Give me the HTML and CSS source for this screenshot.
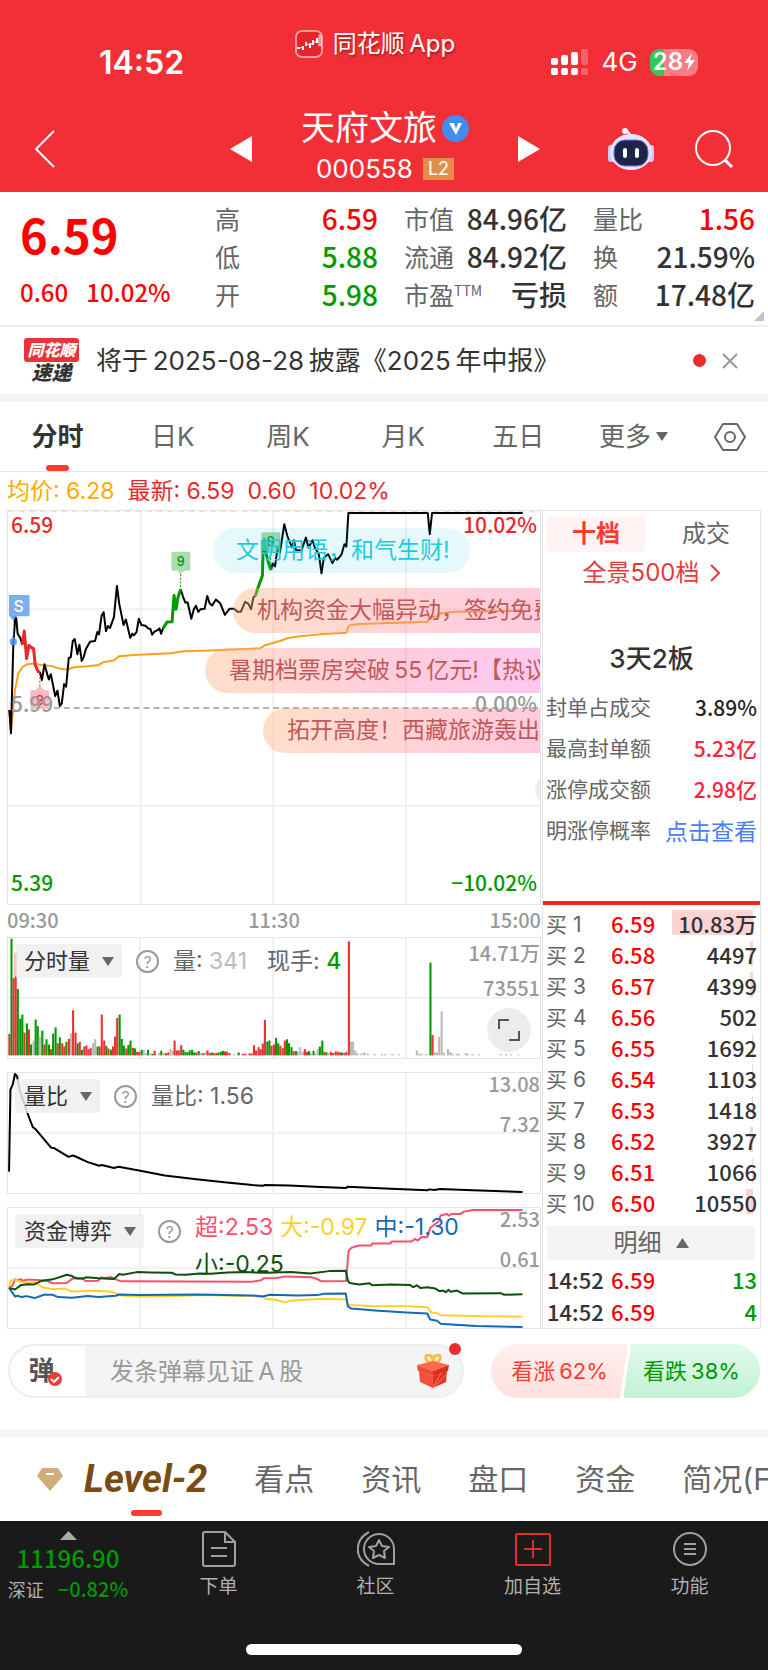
FILE: index.html
```html
<!DOCTYPE html>
<html lang="zh-CN">
	<head>
		<meta charset="utf-8">
		<meta name="viewport" content="width=device-width, initial-scale=1">
		<title>天府文旅 000558</title>
		<link rel="stylesheet" href="styles.css">
	</head>
	<body>
		<header class="top">
			<div class="status">
				<span class="clock">14:52</span>
				<div class="app-mark">
					<svg width="28" height="28" viewBox="0 0 28 28">
						<rect x="1" y="1" width="26" height="26" rx="6" fill="#e3262c" stroke="#f79a9c" stroke-width="2"/>
						<path d="M2 18H5M8 16v4M11 12v4M15 13v5M18 10v5M22 8v5" stroke="#fff" stroke-width="2"/>
						<rect x="24" y="5" width="2" height="11" rx="1" fill="none" stroke="#fff"/>
						<path d="M5 18L8 17M11 14L15 15L18 13L22 11" stroke="#fff" fill="none"/>
					</svg>
					<span>同花顺&thinsp;App</span>
				</div>
				<div class="signals">
					<svg width="38" height="26" viewBox="0 0 38 26" fill="#fff">
						<rect x="0" y="9" width="7" height="7" rx="2"/>
						<rect x="10" y="6" width="7" height="10" rx="2"/>
						<rect x="20" y="3" width="7" height="13" rx="2"/>
						<rect x="30" y="0" width="7" height="16" rx="2" opacity=".25"/>
						<rect x="0" y="19" width="7" height="7" rx="2"/>
						<rect x="10" y="19" width="7" height="7" rx="2"/>
						<rect x="20" y="19" width="7" height="7" rx="2"/>
						<rect x="30" y="19" width="7" height="7" rx="2" opacity=".25"/>
					</svg>
					<span class="net">4G</span>
					<span class="battery">28<svg width="11" height="18" viewBox="0 0 11 18"><path d="M8 0L0 10h5L3 18L11 7H6z" fill="#fff"/></svg></span>
				</div>
			</div>
			<nav class="stock-nav">
				<button class="icon-btn back" aria-label="返回">
					<svg width="22" height="40" viewBox="0 0 22 40"><path d="M20 2L2 20L20 38" fill="none" stroke="#fff" stroke-width="2"/></svg>
				</button>
				<button class="icon-btn prev" aria-label="上一只">
					<svg width="22" height="26" viewBox="0 0 22 26"><path d="M22 0V26L0 13z" fill="#fff"/></svg>
				</button>
				<div class="stock-title">
					<h1>天府文旅
						<svg width="27" height="27" viewBox="0 0 27 27"><circle cx="13.500" cy="13.500" r="13.500" fill="#448df0"/><path d="M7 8h5l2 6l2-6h4l-6 12z" fill="#fff"/></svg>
					</h1>
					<p>000558<span class="l2">L2</span></p>
				</div>
				<button class="icon-btn next" aria-label="下一只">
					<svg width="22" height="26" viewBox="0 0 22 26"><path d="M0 0V26L22 13z" fill="#fff"/></svg>
				</button>
				<button class="icon-btn robot" aria-label="智能助手">
					<svg width="46" height="44" viewBox="0 0 46 44">
						<path d="M22 9C22 5 19 5 17 3" fill="none" stroke="#fff" stroke-width="2"/>
						<circle cx="17" cy="4" r="3" fill="#fff"/>
						<rect x="0" y="18" width="7" height="17" rx="3" fill="#c9caf6"/>
						<rect x="39" y="18" width="7" height="17" rx="3" fill="#c9caf6"/>
						<ellipse cx="23" cy="25" rx="21" ry="18" fill="#e6e6fd"/>
						<rect x="6" y="13" width="34" height="26" rx="11" fill="#1c2547" stroke="#7a6fe8" stroke-width="1"/>
						<rect x="15" y="21" width="4" height="10" rx="2" fill="#fff"/>
						<rect x="27" y="21" width="4" height="10" rx="2" fill="#fff"/>
					</svg>
				</button>
				<button class="icon-btn search" aria-label="搜索">
					<svg width="40" height="40" viewBox="0 0 40 40" fill="none" stroke="#fff" stroke-width="2"><circle cx="19" cy="19" r="17"/><path d="M31 31L38 38" stroke-width="3"/></svg>
				</button>
			</nav>
		</header>

		<section class="quote">
			<div class="price">
				<strong>6.59</strong>
				<p><span>0.60</span><span>10.02%</span></p>
			</div>
			<dl>
				<div><dt>高</dt><dd class="up">6.59</dd></div>
				<div><dt>低</dt><dd class="down">5.88</dd></div>
				<div><dt>开</dt><dd class="down">5.98</dd></div>
			</dl>
			<dl>
				<div><dt>市值</dt><dd>84.96亿</dd></div>
				<div><dt>流通</dt><dd>84.92亿</dd></div>
				<div><dt>市盈<sup>TTM</sup></dt><dd>亏损</dd></div>
			</dl>
			<dl>
				<div><dt>量比</dt><dd class="up">1.56</dd></div>
				<div><dt>换</dt><dd>21.59%</dd></div>
				<div><dt>额</dt><dd>17.48亿</dd></div>
			</dl>
			<svg class="corner" width="10" height="10" viewBox="0 0 10 10"><path d="M10 0V10H0z" fill="#c4c4c4"/></svg>
		</section>

		<section class="news">
			<div class="news-logo"><b>同花顺</b><i>速递</i></div>
			<a href="#">将于&thinsp;2025-08-28&thinsp;披露《2025&thinsp;年中报》</a>
			<span class="dot"></span>
			<button class="icon-btn" aria-label="关闭">
				<svg width="16" height="16" viewBox="0 0 16 16"><path d="M1 1L15 15M15 1L1 15" stroke="#999" stroke-width="2"/></svg>
			</button>
		</section>

		<nav class="periods">
			<button class="active">分时</button>
			<button>日K</button>
			<button>周K</button>
			<button>月K</button>
			<button>五日</button>
			<button>更多<svg width="12" height="9" viewBox="0 0 12 9"><path d="M0 0H12L6 9z" fill="#666"/></svg></button>
			<button aria-label="设置">
				<svg width="32" height="30" viewBox="0 0 32 30" fill="none" stroke="#666" stroke-width="2"><path d="M9 2H23L31 15L23 28H9L1 15z" stroke-linejoin="round"/><circle cx="16" cy="15" r="5"/></svg>
			</button>
		</nav>

		<p class="legend">
			<span class="avg">均价: 6.28</span>
			<span>最新: 6.59</span>
			<span>0.60</span>
			<span>10.02%</span>
		</p>

		<main class="board">
			<div class="charts">
				<div class="chart chart-price">
					<svg class="plot" viewBox="0 0 1602 1185" preserveAspectRatio="none">
						<path class="grid" d="M0 296H1602M0 889H1602M399 0V1185M799 0V1185M1198 0V1185"/>
						<path d="M0 0H1602" stroke="#e8d9bd" stroke-width="5" stroke-dasharray="18 14"/>
						<path d="M138 594H1602" stroke="#999" stroke-width="4" stroke-dasharray="18 12"/>
						<g transform="translate(-21 -330)">
							<polyline class="line" stroke="#ff9f1a" points="25,930 30,990 36,930 42,870 52,820 65,800 80,792 95,790 120,794 150,797 180,806 200,808 220,801 260,798 295,794 305,787 340,780 355,768 400,764 510,759 550,753 630,751 780,744 795,735 840,722 865,713 900,708 960,702 1040,697 1045,680 1052,674 1080,671 1285,664 1290,650 1310,648 1325,638 1370,634 1571,631"/>
							<polyline class="line" stroke="#000" points="25,930 30,1000 37,730 43,650 46,655 50,700 58,712 64,733"/>
							<polyline class="line" stroke="#000" points="117,815 123,840 131,792 140,825 144,838 150,822 163,888 170,872 177,918 183,910 190,852 196,860 204,773 210,771 216,722 222,716 230,762 236,733 243,782 249,770 256,745 268,724 283,722 290,695 295,702 303,645 309,635 316,692 322,677 328,683 340,650 349,556 356,610 369,674 376,657 389,712 395,700 400,705 408,695 415,655 423,674 435,676 443,684 450,686 455,703 462,694 470,690 477,684 482,700 488,684"/>
							<polyline class="line" stroke="#000" points="541,566 548,588 555,606 562,606 573,655 581,625 587,616 594,634 601,626 613,625 621,586 628,608 636,615 647,597 660,608 674,643 688,625 702,625 712,634 722,634 735,604 745,610 753,626 760,590 766,586"/>
							<polyline class="line" stroke="#000" points="813,508 818,488 825,497 833,440 840,455 853,370 862,405 870,425 876,440 882,418 888,448 905,448 918,410 926,440 938,418 945,440 957,460 965,518 972,472 985,460 998,487 1006,472 1012,477 1025,462 1034,430 1040,437 1046,336 1285,336 1291,400 1298,336 1571,336"/>
							<polyline class="line thick" stroke="#e8292c" points="64,733 70,692 77,775 84,735 92,742 98,745 103,795 112,815 117,815"/>
							<polyline class="line thick" stroke="#090" points="488,684 500,665 515,664 521,585 527,626 533,590 541,566"/>
							<polyline class="line thick" stroke="#090" points="766,586 775,558 787,525 789,455 793,415 799,460 805,485 813,508"/>
							<path d="M541 520V566M812 450V508" stroke="#090" stroke-width="3" stroke-dasharray="6 5"/>
							<path d="M117 820V860" stroke="#e8292c" stroke-width="3" stroke-dasharray="6 5"/>
							<path d="M37 650V714" stroke="#4c92f0" stroke-width="3" stroke-dasharray="5 5"/>
							<circle cx="37" cy="724" r="11" fill="#4c92f0" opacity=".85"/>
							<path d="M24 583H82Q86 583 86 587V643Q86 647 82 647H48L37 660L26 647H24z" fill="#5d9bec" opacity=".8"/>
							<path d="M513 458Q513 453 518 453H565Q570 453 570 458V505Q570 510 565 510H552L541 521L530 510H518Q513 510 513 505z" fill="#8fd196" opacity=".75"/>
							<path d="M784 399Q784 394 789 394H836Q841 394 841 399V446Q841 450 836 450H823L812 461L801 450H789Q784 450 784 446z" fill="#7fc98a" opacity=".7"/>
							<path d="M88 875Q88 870 93 870H105L117 856L129 870H140Q145 870 145 875V922Q145 927 140 927H93Q88 927 88 922z" fill="#f5a0a4" opacity=".7"/>
							<text class="tag" x="53" y="634" font-size="48" fill="#fff">S</text>
							<text class="tag" x="541" y="496" font-size="38" fill="#090">9</text>
							<text class="tag" x="812" y="436" font-size="38" fill="#090">9</text>
							<text class="tag" x="117" y="915" font-size="38" fill="#f22">9</text>
						</g>
					</svg>
					<div class="danmu">
						<span class="polite">文明用语，和气生财!</span>
						<span class="d1">机构资金大幅异动，签约免费</span>
						<span class="d2">暑期档票房突破&thinsp;55&thinsp;亿元!【热议】</span>
						<span class="d3">拓开高度！西藏旅游轰出</span>
					</div>
					<span class="drawer"></span>
					<div class="scale num">
						<p class="up"><span>6.59</span><span>10.02%</span></p>
						<p><span>5.99</span><span>0.00%</span></p>
						<p class="down"><span>5.39</span><span>−10.02%</span></p>
					</div>
				</div>
				<p class="times num"><span>09:30</span><span>11:30</span><span>15:00</span></p>

				<div class="chart chart-sub">
					<svg class="plot" viewBox="0 0 1520 365" preserveAspectRatio="none">
						<path class="grid" d="M0 182H1520M377 0V365M757 0V365M1137 0V365"/>
						<g id="volume" transform="translate(-22 -650)"></g>
					</svg>
					<div class="sub-head">
						<label class="picker"><select aria-label="指标一"><option>分时量</option></select><svg width="12" height="9" viewBox="0 0 12 9"><path d="M0 0H12L6 9z" fill="#666"/></svg></label>
						<button class="help" aria-label="说明">?</button>
						<p><span>量: <em>341</em></span><span>现手: <b class="down">4</b></span></p>
					</div>
					<p class="sub-scale volume-scale num"><span>14.71万</span><span>73551</span></p>
					<button class="expand" aria-label="全屏">
						<svg width="24" height="24" viewBox="0 0 24 24" fill="none" stroke="#555" stroke-width="2"><path d="M2 11V2H12M22 13V22H12"/></svg>
					</button>
				</div>

				<div class="chart chart-sub">
					<svg class="plot" viewBox="0 0 1520 365" preserveAspectRatio="none">
						<path class="grid" d="M0 182H1520M377 0V365M757 0V365M1137 0V365"/>
						<polyline class="line" stroke="#000" transform="translate(-22 -35)" points="25,335 29,85 35,72 42,38 48,45 55,85 75,150 93,200 100,205 145,262 155,264 195,290 207,286 215,289 250,306 283,317 290,315 325,324 338,320 400,332 470,347 560,358 640,367 720,376 750,378 755,376 825,377 900,381 988,385 992,381 1100,386 1220,392 1226,389 1240,391 1256,388 1350,392 1492,397"/>
					</svg>
					<div class="sub-head">
						<label class="picker"><select aria-label="指标二"><option>量比</option></select><svg width="12" height="9" viewBox="0 0 12 9"><path d="M0 0H12L6 9z" fill="#666"/></svg></label>
						<button class="help" aria-label="说明">?</button>
						<p><span>量比: 1.56</span></p>
					</div>
					<p class="sub-scale num"><span>13.08</span><span>7.32</span></p>
				</div>

				<div class="chart chart-sub">
					<svg class="plot" viewBox="0 0 1520 365" preserveAspectRatio="none">
						<path class="grid" d="M0 182H1520M377 0V365M757 0V365M1137 0V365"/>
						<g transform="translate(-22 -439)">
							<polyline class="line" stroke="#fd4f6b" points="25,680 35,675 42,655 50,660 57,655 65,660 75,657 100,657 130,660 150,668 190,667 207,653 222,654 235,652 243,661 280,660 287,650 300,652 318,649 330,656 345,662 720,663 745,659 752,653 790,652 815,647 890,650 905,655 918,662 988,661 995,570 1003,560 1025,553 1060,553 1063,547 1115,547 1118,541 1175,541 1185,533 1193,538 1203,527 1220,528 1228,500 1240,490 1252,480 1258,462 1275,457 1282,462 1290,457 1315,457 1325,450 1350,445 1492,445"/>
							<polyline class="line" stroke="#fbd02d" points="25,682 30,660 42,656 55,663 80,667 100,665 120,680 150,686 185,684 205,693 270,691 320,694 345,705 400,708 500,707 580,704 750,708 760,716 790,719 812,726 830,721 880,717 920,715 988,717 993,734 1060,737 1160,738 1220,741 1232,757 1245,758 1258,765 1380,768 1492,770"/>
							<polyline class="line" stroke="#1468b8" points="25,682 42,708 50,706 60,710 75,707 98,713 125,703 150,703 165,710 205,712 250,707 280,710 330,706 340,702 400,704 560,702 720,705 750,708 770,703 850,705 905,704 925,700 987,699 993,738 1003,745 1070,751 1160,757 1220,760 1228,778 1248,782 1258,791 1300,794 1360,798 1492,801"/>
							<polyline class="line" stroke="#0c4f0c" points="25,682 42,687 60,673 80,671 95,672 120,660 150,656 190,642 205,646 215,652 235,654 245,650 280,653 325,655 340,640 350,642 390,634 430,635 490,636 500,641 530,642 570,638 600,639 650,635 700,634 760,636 830,634 885,638 940,631 987,630 993,660 998,667 1025,672 1055,668 1062,674 1115,672 1170,673 1180,680 1190,674 1200,682 1220,680 1243,684 1255,692 1265,690 1273,695 1280,688 1287,694 1305,690 1320,699 1430,698 1440,703 1492,701"/>
						</g>
					</svg>
					<div class="sub-head">
						<label class="picker"><select aria-label="指标三"><option>资金博弈</option></select><svg width="12" height="9" viewBox="0 0 12 9"><path d="M0 0H12L6 9z" fill="#666"/></svg></label>
						<button class="help" aria-label="说明">?</button>
						<p class="flows"><span class="f-super">超:2.53</span><span class="f-big">大:-0.97</span><span class="f-mid">中:-1.30</span><span class="f-small">小:-0.25</span></p>
					</div>
					<p class="sub-scale num"><span>2.53</span><span>0.61</span></p>
				</div>
			</div>

			<aside class="depth">
				<div class="depth-tabs"><button class="active">十档</button><button>成交</button></div>
				<a class="panorama" href="#">全景500档<svg width="10" height="18" viewBox="0 0 10 18"><path d="M1 1L9 9L1 17" fill="none" stroke="#e8393b" stroke-width="2"/></svg></a>
				<h2>3天2板</h2>
				<dl class="facts">
					<div><dt>封单占成交</dt><dd>3.89%</dd></div>
					<div><dt>最高封单额</dt><dd class="hot">5.23亿</dd></div>
					<div><dt>涨停成交额</dt><dd class="hot">2.98亿</dd></div>
					<div><dt>明涨停概率</dt><dd><a href="#">点击查看</a></dd></div>
				</dl>
				<table class="orders">
					<tr><th>买 1</th><td class="up">6.59</td><td class="vol" style="--w:81px">10.83万</td></tr>
					<tr><th>买 2</th><td class="up">6.58</td><td class="vol" style="--w:3px">4497</td></tr>
					<tr><th>买 3</th><td class="up">6.57</td><td class="vol" style="--w:3px">4399</td></tr>
					<tr><th>买 4</th><td class="up">6.56</td><td class="vol" style="--w:0px">502</td></tr>
					<tr><th>买 5</th><td class="up">6.55</td><td class="vol" style="--w:1px">1692</td></tr>
					<tr><th>买 6</th><td class="up">6.54</td><td class="vol" style="--w:1px">1103</td></tr>
					<tr><th>买 7</th><td class="up">6.53</td><td class="vol" style="--w:1px">1418</td></tr>
					<tr><th>买 8</th><td class="up">6.52</td><td class="vol" style="--w:3px">3927</td></tr>
					<tr><th>买 9</th><td class="up">6.51</td><td class="vol" style="--w:1px">1066</td></tr>
					<tr><th>买 10</th><td class="up">6.50</td><td class="vol" style="--w:7px">10550</td></tr>
				</table>
				<button class="detail">明细<svg width="13" height="10" viewBox="0 0 13 10"><path d="M0 10H13L6.500 0z" fill="#666"/></svg></button>
				<table class="trades">
					<tr><td>14:52</td><td class="up">6.59</td><td class="down">13</td></tr>
					<tr><td>14:52</td><td class="up">6.59</td><td class="down">4</td></tr>
				</table>
			</aside>
		</main>

		<section class="comment">
			<div class="comment-box">
				<button class="danmu-toggle" aria-label="弹幕开关">弹
					<svg width="14" height="14" viewBox="0 0 14 14"><circle cx="7" cy="7" r="7" fill="#f03a36"/><path d="M3 7L6 10L11 5" fill="none" stroke="#fff" stroke-width="2"/></svg>
				</button>
				<input type="text" aria-label="发弹幕" placeholder="发条弹幕见证&thinsp;A&thinsp;股">
				<button class="icon-btn gift" aria-label="礼物">
					<svg width="32" height="34" viewBox="0 0 32 34">
						<path d="M16 9C8 9 7 1 11 1S16 5 16 9C16 5 17 1 21 1S24 9 16 9z" fill="none" stroke="#f8bb4e" stroke-width="3"/>
						<path d="M0 11L16 7L32 11L16 17z" fill="#ff6b4b"/>
						<path d="M0 11L16 17V22L1 17z" fill="#f04a32"/><path d="M32 11L16 17V22L31 17z" fill="#d9301f"/>
						<path d="M2 17L16 22V34L3 28z" fill="#f4503a"/><path d="M30 17L16 22V34L29 28z" fill="#e03324"/>
						<path d="M16 34L24 19M16 34L29 21" stroke="#fa7a55" stroke-width="1"/>
					</svg>
				</button>
				<span class="dot"></span>
			</div>
			<div class="votes">
				<button class="bull">看涨&thinsp;62%</button>
				<button class="bear">看跌&thinsp;38%</button>
			</div>
		</section>

		<nav class="sections">
			<a class="level2" href="#">
				<svg width="26" height="24" viewBox="0 0 26 24"><path d="M5 1H21L26 9L13 24L0 9z" fill="#cfae7c"/><path d="M9 7H17" stroke="#fff" stroke-width="2"/></svg>
				<span>Level-2</span>
			</a>
			<a href="#">看点</a>
			<a href="#">资讯</a>
			<a href="#">盘口</a>
			<a href="#">资金</a>
			<a href="#">简况(F10)</a>
		</nav>

		<footer class="bottom">
			<div class="bottom-items">
				<a class="index num" href="#">
					<svg width="17" height="9" viewBox="0 0 17 9"><path d="M0 9H17L8.500 0z" fill="#aaa"/></svg>
					<strong>11196.90</strong>
					<span>深证 <b>−0.82%</b></span>
				</a>
				<a href="#">
					<svg width="34" height="36" viewBox="0 0 34 36" fill="none" stroke="#a0a0a0" stroke-width="2"><path d="M3 1H23L33 11V33Q33 35 31 35H3Q1 35 1 33V3Q1 1 3 1zM23 1V11H33M9 17H25M9 25H25"/></svg>
					下单
				</a>
				<a href="#">
					<svg width="38" height="36" viewBox="0 0 38 36" fill="none" stroke="#a0a0a0" stroke-width="2"><path d="M12 1C-3 9-3 27 12 35M22 3A15 15 0 0 0 22 33H37V18A15 15 0 0 0 22 3z"/><path d="M22 9L25 15L32 16L27 20L28 27L22 24L16 27L17 20L12 16L19 15z" stroke-linejoin="round"/></svg>
					社区
				</a>
				<a href="#">
					<svg width="36" height="36" viewBox="0 0 36 36" fill="none" stroke="#e8292c" stroke-width="2"><rect x="1" y="3" width="34" height="31" rx="1"/><path d="M9 18H27M18 9V27"/></svg>
					加自选
				</a>
				<a href="#">
					<svg width="36" height="36" viewBox="0 0 36 36" fill="none" stroke="#a0a0a0" stroke-width="2"><circle cx="18" cy="18" r="16"/><path d="M12 13H24M12 18H24M12 23H24"/></svg>
					功能
				</a>
			</div>
			<div class="home-bar"></div>
		</footer>

	<script>
		// one entry per minute: x, colour (r up, g down, k flat), top of the bar
		const bars = "26r942 32g652 38r772 44r695 50g805 57g895 63g883 69r938 76g910 82r928 88g974 95k962 101g898 107g918 113k950 120g932 126r974 132g958 139g974 145r988 151g941 158g922 164r970 170g952 177r970 183r980 189g966 196r957 202k940 208r870 215r938 221g971 227r966 233g990 240r980 246r977 252r988 258r985 265k970 271k958 278g980 284r980 290r883 297r962 303g978 309r986 316g990 322r980 328r950 334r893 341g883 347g957 353g977 360r986 366g975 372g962 379r984 385g986 391r996 397r996 404g990 410k990 416k1000 422g990 429k1001 435g1002 441r993 454k1000 460g993 467k1000 473r1000 480r998 486k988 492k992 498r962 504r992 510r992 517r976 523g990 529g996 535g998 541g992 548g990 554g998 560r998 567g994 573k1000 580r1000 586k998 592r992 598r1000 604g998 610r1000 617r1000 623g998 630g996 636g993 642r995 648r996 655r1000 667k1003 681g998 693r1002 700r1002 712r1001 718r1001 725r976 731r992 738r982 744r988 750r971 756r899 763g965 769g962 775r978 782r974 788g954 794g970 800r978 807r985 813r962 819g958 825g970 832g982 838r994 845g994 851k996 857k982 864k996 870r988 876r996 882g994 888k1000 895g993 901k1000 907k988 913g980 920g962 926r996 932g998 939k1000 945r996 951r1000 958r995 964r996 970r998 976g998 983r1000 989r996 996r660 1002k965 1008k965 1014k992 1020k1000 1032k1001 1040k998 1050k1001 1070k1003 1090k1003 1100k1003 1120k1003 1140k1003 1190k992 1197k1002 1204k1002 1216k1003 1229g725 1235r945 1242k998 1248k998 1254k951 1261k873 1267k998 1279k988 1286k997 1292k1002 1304k1003 1310k1002 1330k1000 1336k1003 1349k1003 1368k1004 1430k1003 1445k1003 1460k1004 1480k1004";
		const colors = { r: "#ee2f32", g: "#090", k: "#b9b9b9" };
		const volume = document.getElementById("volume");

		bars.split(" ").forEach(function(bar) {
			const [, x, side, top] = bar.match(/(\d+)([rgk])(\d+)/);
			const path = document.createElementNS("http://www.w3.org/2000/svg", "path");
			path.setAttribute("d", `M${x} 1007V${top}`);
			path.setAttribute("stroke", colors[side]);
			path.setAttribute("stroke-width", 6);
			volume.appendChild(path);
		});
	</script>
	</body>
</html>
```
FILE: styles.css
```css
* {
	box-sizing: border-box;
	margin: 0;
	padding: 0;
}

body {
	background: #fff;
	color: #333;
	font-family: Inter, "Noto Sans CJK SC", sans-serif;
	font-size: 22px;
	line-height: 1;
}

svg {
	display: block;
	flex: none;
}

button {
	background: none;
	border: 0;
	color: inherit;
	font: inherit;
}

a {
	color: inherit;
	text-decoration: none;
}

.icon-btn {
	display: block;
}

.num {
	font-family: "Noto Sans CJK SC", sans-serif;
	font-weight: 500;
}

.up {
	color: #f00;
}
.down {
	color: #090;
}

/* header */
.top {
	background: #f22f37;
	color: #fff;
	height: 192px;
}

.status {
	display: grid;
	grid-template-columns: 1fr auto 1fr;
	height: 100px;
	padding: 0 70px;
}

.clock {
	padding: 47px 0 0 29px;
	font-size: 32px;
	font-weight: 600;
}

.app-mark {
	display: flex;
	align-items: center;
	gap: 10px;
	height: 88px;
	padding-right: 18px;
	font-size: 24px;
	text-shadow: 1px 2px 2px rgba(0, 0, 0, .35);
}

.signals {
	display: flex;
	align-items: center;
	justify-content: flex-end;
	gap: 12px;
	height: 124px;
	font-size: 26px;
}

.battery {
	display: flex;
	align-items: center;
	gap: 1px;
	height: 27px;
	padding: 0 3px;
	border-radius: 9px;
	background: linear-gradient(90deg, #35c759 14px, #f87c81 14px);
	font-size: 24px;
	font-weight: 600;
}

.stock-nav {
	display: flex;
	align-items: center;
	height: 92px;
	padding: 6px 34px 0;
}

.stock-nav .prev {
	margin-left: auto;
}

.stock-title {
	width: 266px;
	text-align: center;
}

.stock-title h1 {
	display: flex;
	align-items: center;
	justify-content: center;
	gap: 5px;
	height: 40px;
	font-size: 34px;
	font-weight: 400;
}

.stock-title p {
	display: flex;
	align-items: center;
	justify-content: center;
	gap: 10px;
	height: 42px;
	font-size: 26px;
}

.l2 {
	padding: 2px 5px;
	background: #e29047;
	font-size: 18px;
}

.stock-nav .next {
	margin-right: 68px;
}

.stock-nav .robot {
	margin-right: 40px;
}

/* quote */
.quote {
	position: relative;
	display: grid;
	grid-template-columns: 1fr 163px 163px 162px;
	column-gap: 26px;
	height: 135px;
	padding: 7px 13px 0 20px;
	border-bottom: 2px solid #eee;
	font-family: "Noto Sans CJK SC", sans-serif;
}

.price {
	color: #f00;
	font-weight: 500;
}

.price strong {
	display: block;
	height: 76px;
	font-size: 47px;
	font-weight: 700;
	line-height: 70px;
}

.price p {
	display: flex;
	gap: 18px;
	font-size: 24px;
	line-height: 34px;
}

.quote dl div {
	display: flex;
	justify-content: space-between;
	align-items: center;
	height: 38px;
}

.quote dt {
	color: #666;
	font-size: 25px;
}

.quote sup {
	font-size: 14px;
}

.quote dd {
	font-size: 28px;
	font-weight: 500;
	white-space: nowrap;
}

.corner {
	position: absolute;
	right: 4px;
	bottom: 4px;
}

.news {
	display: flex;
	align-items: center;
	height: 75px;
	padding: 0 30px 0 24px;
	border-bottom: 8px solid #f4f4f4;
}

.news-logo {
	width: 55px;
	margin-right: 17px;
	text-align: center;
}

.news-logo b {
	display: block;
	padding: 2px 0;
	border-radius: 3px;
	background: #e8333a;
	color: #fff;
	font-size: 16px;
	font-style: italic;
	font-weight: 900;
	line-height: 20px;
}

.news-logo i {
	display: block;
	font-size: 20px;
	font-weight: 900;
	line-height: 22px;
}

.news a {
	flex: 1;
	font-size: 26px;
}

.dot {
	width: 13px;
	height: 13px;
	border-radius: 50%;
	background: #ea2c30;
}

.news .dot {
	margin-right: 16px;
}

.periods {
	display: grid;
	grid-template-columns: repeat(6, 15%) 10%;
	height: 70px;
	border-bottom: 1px solid #e8e8e8;
}

.periods button {
	display: flex;
	align-items: center;
	justify-content: center;
	gap: 5px;
	color: #666;
	font-size: 26px;
}

.periods .active {
	position: relative;
	color: #333;
	font-weight: 700;
}

.periods .active::after {
	content: "";
	position: absolute;
	bottom: 0;
	width: 23px;
	height: 6px;
	border-radius: 3px;
	background: #ff3b30;
}

.legend {
	display: flex;
	gap: 13px;
	padding: 0 7px;
	color: #e8292c;
	font-size: 23px;
	line-height: 38px;
}

.legend .avg {
	color: #fa0;
}

/* charts */
.board {
	display: grid;
	grid-template-columns: 1fr 219px;
	gap: 1px;
	padding: 0 7px;
}

.chart {
	position: relative;
	overflow: hidden;
	border: 1px solid #e4e4e4;
}

.chart-price {
	height: 395px;
}

.chart-sub {
	height: 122px;
	margin-bottom: 13px;
}

.chart-sub:last-child {
	margin-bottom: 0;
}

.plot {
	position: absolute;
	inset: 0;
	width: 100%;
	height: 100%;
}

.grid {
	fill: none;
	stroke: #f0f0f0;
	stroke-width: 2px;
	vector-effect: non-scaling-stroke;
}

.line {
	fill: none;
	stroke-width: 2px;
	stroke-linejoin: round;
	vector-effect: non-scaling-stroke;
}

.line.thick {
	stroke-width: 3px;
}

.tag {
	text-anchor: middle;
	font-weight: 500;
}

.danmu {
	position: absolute;
	inset: 0;
	display: flex;
	flex-direction: column;
	gap: 15px;
	padding-top: 17px;
	font-size: 23px;
	line-height: 45px;
	white-space: nowrap;
}

.danmu span {
	padding-left: 24px;
	border-radius: 23px 0 0 23px;
	background: linear-gradient(100deg, rgba(255, 175, 121, .4), rgba(255, 127, 172, .4) 90%);
	color: #c0595a;
}

.danmu .polite {
	align-self: flex-start;
	margin-left: 205px;
	padding: 0 20px 0 23px;
	border-radius: 23px;
	background: rgba(0, 200, 230, .1);
	color: #1ccbe0;
}

.danmu .d1 {
	margin-left: 225px;
}

.danmu .d2 {
	margin-left: 197px;
	background: linear-gradient(100deg, rgba(255, 175, 121, .4), rgba(255, 127, 172, .4) 60%, rgba(250, 117, 222, .4));
}

.danmu .d3 {
	margin-left: 255px;
}

.drawer {
	position: absolute;
	right: -29px;
	top: 262px;
	width: 34px;
	height: 34px;
	border-radius: 50%;
	background: #eee;
}

.scale {
	position: relative;
	display: flex;
	flex-direction: column;
	justify-content: space-between;
	height: 100%;
	padding: 3px 3px 11px;
	color: #999;
	font-size: 21px;
}

.scale p,
.times {
	display: flex;
	justify-content: space-between;
}

.scale .up {
	color: #e8292c;
}

.times {
	color: #999;
	font-size: 20px;
	line-height: 30px;
	padding-bottom: 2px;
}

.sub-head {
	position: relative;
	display: flex;
	align-items: flex-start;
	gap: 14px;
	padding: 6px 0 0 7px;
	color: #666;
	line-height: 34px;
}

.picker {
	display: flex;
	align-items: center;
	gap: 11px;
	height: 34px;
	padding: 0 8px 0 9px;
	border-radius: 4px;
	background: rgba(238, 238, 238, .85);
}

.picker select {
	appearance: none;
	border: 0;
	background: none;
	color: #333;
	font: inherit;
}

.help {
	width: 23px;
	height: 23px;
	margin-top: 6px;
	border: 2px solid #999;
	border-radius: 50%;
	color: #999;
	font-size: 16px;
	line-height: 18px;
}

.sub-head p {
	display: flex;
	gap: 20px;
	font-size: 23px;
}

.sub-head em {
	color: #bbb;
	font-style: normal;
}

.sub-head b {
	font-weight: 500;
}

.sub-head .flows {
	flex-wrap: wrap;
	gap: 0 7px;
	width: 300px;
	margin-top: -5px;
	line-height: 37px;
}

.f-super {
	color: #fd4f6b;
}
.f-big {
	color: #fbd02d;
}
.f-mid {
	color: #1468b8;
}
.f-small {
	color: #0c4f0c;
}

.sub-scale {
	position: absolute;
	top: 0;
	right: 0;
	display: flex;
	flex-direction: column;
	gap: 18px;
	color: #999;
	font-size: 20px;
	line-height: 22px;
	text-align: right;
}

.volume-scale {
	gap: 13px;
	padding-top: 4px;
}

.expand {
	position: absolute;
	right: 9px;
	bottom: 6px;
	display: grid;
	place-items: center;
	width: 44px;
	height: 44px;
	border-radius: 50%;
	background: #ececec;
}

/* order book */
.depth {
	border: 1px solid #e4e4e4;
}

.depth-tabs {
	display: grid;
	grid-template-columns: 98px 98px;
	gap: 12px;
	padding: 5px 4px 0;
}

.depth-tabs button {
	height: 36px;
	border-radius: 4px;
	color: #666;
	font-size: 24px;
}

.depth-tabs .active {
	background: #fff3f3;
	color: #ff3b30;
	font-weight: 700;
}

.panorama {
	display: flex;
	align-items: center;
	justify-content: center;
	gap: 11px;
	height: 42px;
	color: #e8393b;
	font-size: 24px;
}

.depth h2 {
	height: 92px;
	padding-top: 52px;
	font-size: 26px;
	font-weight: 500;
	text-align: center;
}

.facts {
	height: 219px;
	padding: 1px 3px;
	border-bottom: 4px solid #e8292c;
}

.facts div {
	display: flex;
	align-items: center;
	justify-content: space-between;
	height: 41px;
}

.facts dt {
	color: #666;
	font-size: 21px;
}

.facts dd {
	color: #222;
	font-family: "Noto Sans CJK SC", sans-serif;
	font-weight: 500;
	font-size: 21px;
}

.facts .hot {
	color: #fb2438;
}

.facts a {
	color: #4d7cf3;
	font-size: 23px;
	font-weight: 400;
}

.depth table {
	width: 100%;
	border-collapse: collapse;
	table-layout: fixed;
	font-weight: 500;
}

.depth td,
.depth th {
	height: 31px;
	font-family: "Noto Sans CJK SC", sans-serif;
	text-align: left;
	white-space: nowrap;
}

.depth th {
	width: 68px;
	padding: 3px 0 0 3px;
	color: #666;
	font-family: inherit;
	font-size: 21px;
	font-weight: 400;
}

.orders {
	margin-top: 2px;
}

.orders td:nth-child(2) {
	width: 60px;
}

.depth td:last-child {
	padding-right: 3px;
	text-align: right;
}

.orders .vol {
	background: linear-gradient(#fad4d5, #fad4d5) no-repeat right 7px center / var(--w) 25px;
}

.detail {
	display: flex;
	align-items: center;
	justify-content: center;
	gap: 14px;
	width: 208px;
	height: 34px;
	margin: 9px auto 3px 4px;
	background: #f4f4f4;
	color: #666;
	font-size: 24px;
}

.depth .trades td {
	height: 32px;
}

.trades td:first-child {
	width: 68px;
	padding-left: 4px;
}

/* comment box */
.comment {
	display: flex;
	align-items: center;
	gap: 27px;
	height: 108px;
	padding: 0 8px 16px;
	border-bottom: 8px solid #f4f4f4;
}

.comment-box {
	position: relative;
	display: flex;
	align-items: center;
	flex: 1;
	min-width: 0;
	height: 54px;
	border: 2px solid #eee;
	border-radius: 27px;
	background: #f4f4f4;
}

.danmu-toggle {
	position: relative;
	width: 75px;
	height: 50px;
	padding-right: 12px;
	border-radius: 25px 0 0 25px;
	background: #fff;
	color: #555;
	font-size: 26px;
	font-weight: 700;
}

.danmu-toggle svg {
	position: absolute;
	right: 23px;
	bottom: 10px;
}

.comment-box input {
	flex: 1;
	min-width: 0;
	padding-left: 25px;
	border: 0;
	outline: 0;
	background: none;
	color: #333;
	font: inherit;
	font-size: 24px;
}

.comment-box input::placeholder {
	color: #999;
}

.gift {
	margin-right: 13px;
}

.comment-box .dot {
	position: absolute;
	top: -3px;
	right: 1px;
	width: 12px;
	height: 12px;
}

.votes {
	display: flex;
}

.votes button {
	width: 137px;
	height: 54px;
	font-size: 22px;
	white-space: nowrap;
}

.bull {
	border-radius: 27px 4px 4px 27px;
	background: linear-gradient(#fff0ef, #ffe0de);
	clip-path: polygon(0 0, 100% 0, 94% 100%, 0 100%);
}

.votes .bull {
	color: #ff3b30;
}

.votes .bear {
	margin-left: -5px;
	border-radius: 4px 27px 27px 4px;
	background: linear-gradient(#e2f9eb, #c2f2d5);
	clip-path: polygon(6% 0, 100% 0, 100% 100%, 0 100%);
	color: #090;
}

.sections {
	display: flex;
	align-items: center;
	gap: 47px;
	height: 84px;
	padding-left: 37px;
	overflow: hidden;
	color: #666;
	font-size: 30px;
	white-space: nowrap;
}

.level2 {
	position: relative;
	display: flex;
	align-items: center;
	gap: 21px;
	height: 100%;
	color: #7a4c12;
	font-family: Roboto, sans-serif;
	font-size: 38px;
	font-style: italic;
	font-weight: 700;
}

.level2::after {
	content: "";
	position: absolute;
	left: 94px;
	bottom: 5px;
	width: 31px;
	height: 6px;
	border-radius: 3px;
	background: #ff3b30;
}

/* bottom bar */
.bottom {
	height: 149px;
	background: #1a1a1a;
	color: #b0b0b0;
}

.bottom-items {
	display: grid;
	grid-template-columns: 140px repeat(4, 1fr);
	height: 123px;
	padding-top: 10px;
	font-size: 19px;
}

.bottom-items a {
	display: flex;
	flex-direction: column;
	align-items: center;
	gap: 10px;
}

.bottom-items .index {
	gap: 5px;
	padding-right: 4px;
}

.index strong {
	color: #090;
	font-size: 24px;
	font-weight: 500;
	line-height: 26px;
}

.index span {
	font-size: 18px;
	font-weight: 400;
	line-height: 26px;
}

.index b {
	margin-left: 10px;
	color: #090;
	font-size: 20px;
	font-weight: 500;
}

.home-bar {
	width: 36%;
	height: 11px;
	margin: 0 auto;
	border-radius: 6px;
	background: #fff;
}
```
